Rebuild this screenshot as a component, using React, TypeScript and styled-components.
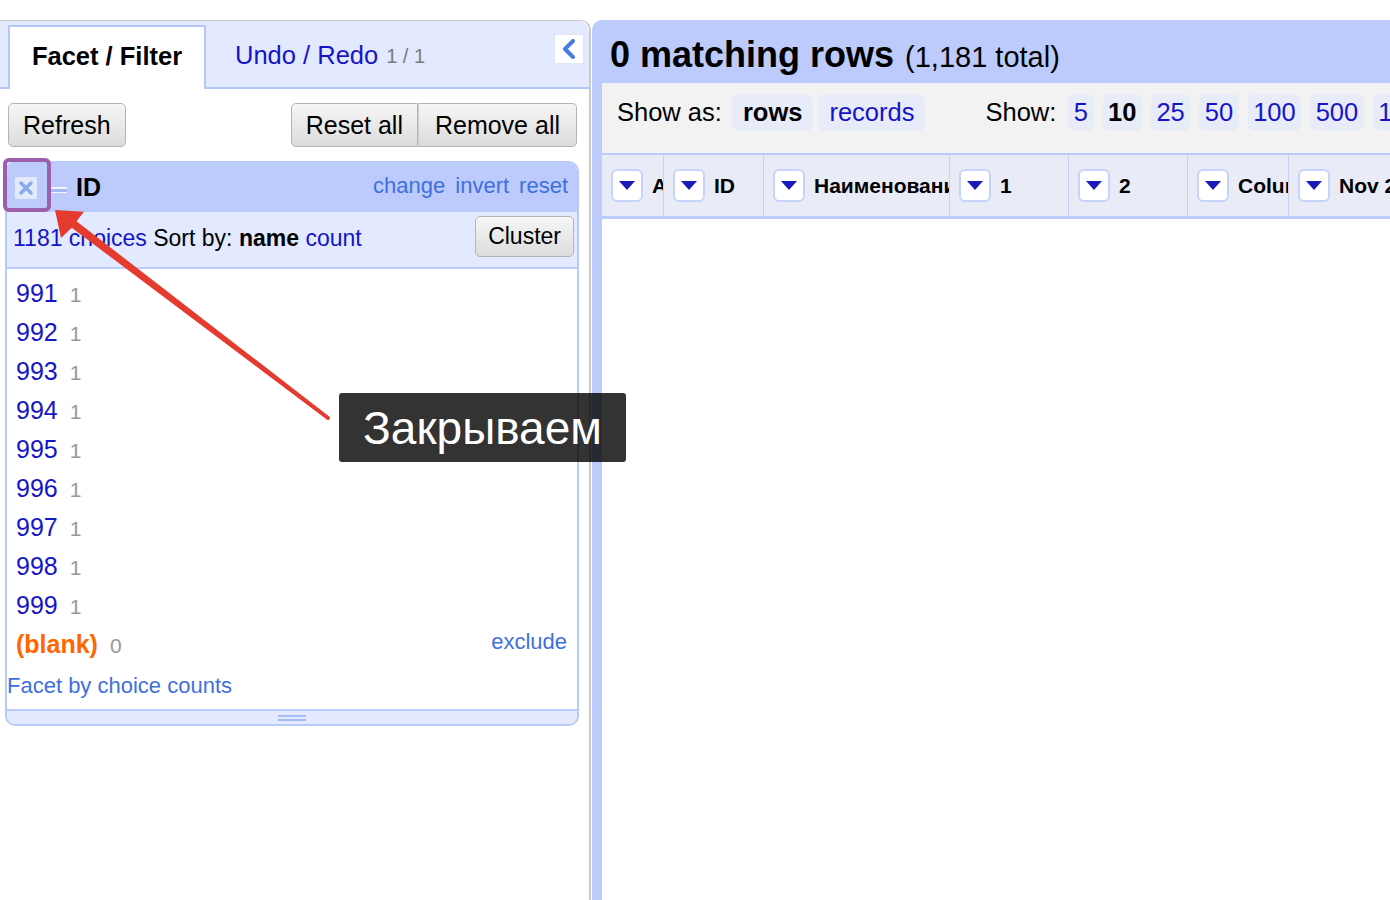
import styled, { createGlobalStyle } from "styled-components";

const GlobalStyle = createGlobalStyle`
  html, body {
    margin: 0;
    padding: 0;
    background: #fff;
    font-family: "Liberation Sans", Arial, Helvetica, sans-serif;
  }
  * {
    box-sizing: border-box;
  }
`;

const BLUE = "#bccbfb";
const LIGHT = "#e3e9ff";
const LINK = "#1515c8";
const SOFT_LINK = "#3f6fdf";

const Page = styled.div`
  position: relative;
  display: flex;
  height: 900px;
  padding-top: 20px;
  overflow: hidden;
`;

/* ---------- left panel ---------- */

const LeftPanel = styled.div`
  width: 591px;
  flex-shrink: 0;
  border-top: 1px solid #c9c9c9;
  border-right: 2px solid #c9c9c9;
  border-top-right-radius: 10px;
  display: flex;
  flex-direction: column;
`;

const TabBar = styled.div`
  display: flex;
  align-items: flex-end;
  height: 68px;
  padding-left: 8px;
  background: ${LIGHT};
  border-bottom: 2px solid #b4c7f6;
  border-top-right-radius: 10px;
`;

const Tab = styled.div<{ $active?: boolean }>`
  height: 64px;
  display: flex;
  align-items: center;
  justify-content: center;
  padding-bottom: 4px;
  font-size: 25.5px;
  white-space: nowrap;
  margin-bottom: -2px;
  ${(p) =>
    p.$active
      ? `
    width: 198px;
    background: #fff;
    border: 2px solid #b4c7f6;
    border-bottom: none;
    font-weight: bold;
    color: #000;
  `
      : `
    padding-left: 29px;
    color: ${LINK};
  `}
`;

const TabCount = styled.span`
  color: #7c7c7c;
  font-size: 20px;
  margin-left: 8px;
  margin-top: 3px;
`;

const CollapseButton = styled.div`
  margin-left: auto;
  margin-right: 5px;
  align-self: flex-start;
  margin-top: 13px;
  width: 30px;
  height: 30px;
  background: #fff;
  border: 1px solid #dfe5f2;
  display: flex;
  align-items: center;
  justify-content: center;
`;

const ButtonRow = styled.div`
  display: flex;
  justify-content: space-between;
  padding: 14px 12px 0 8px;
`;

const ButtonGroup = styled.div`
  display: flex;
`;

const Button = styled.button<{ $pos?: "left" | "right" }>`
  font-family: inherit;
  font-size: 25px;
  color: #000;
  height: 44px;
  padding: 0 ${(p) => (p.$pos === "right" ? "16px" : "14px")};
  background: linear-gradient(#f6f6f6, #dcdcdc);
  border: 1px solid #b4b4b4;
  border-radius: ${(p) =>
    p.$pos === "left" ? "5px 0 0 5px" : p.$pos === "right" ? "0 5px 5px 0" : "5px"};
  ${(p) => (p.$pos === "right" ? "border-left: 1px solid #cfcfcf;" : "")}
`;

const FacetCard = styled.div`
  margin: 14px 10px 0 5px;
  border: 2px solid #b8cbf8;
  border-radius: 10px;
  overflow: hidden;
  background: #fff;
`;

const FacetHeader = styled.div`
  height: 49px;
  display: flex;
  align-items: center;
  padding: 0 9px 0 8px;
  background: ${BLUE};
`;

const FacetTitle = styled.span`
  font-size: 25px;
  font-weight: bold;
  color: #000;
  margin-left: 9px;
`;

const HeaderLinks = styled.div`
  margin-left: auto;
  display: flex;
  gap: 10px;
  font-size: 22px;
  color: ${SOFT_LINK};
  margin-bottom: 4px;
`;

const FacetSubheader = styled.div`
  height: 57px;
  display: flex;
  align-items: flex-start;
  padding: 4px 3px 0 6px;
  background: ${LIGHT};
  border-bottom: 2px solid ${BLUE};
`;

const SubText = styled.div`
  font-size: 23px;
  color: #000;
  margin-top: 9px;
  white-space: nowrap;
`;

const Link = styled.span`
  color: ${LINK};
`;

const Strong = styled.span`
  font-weight: bold;
`;

const ClusterButton = styled(Button)`
  margin-left: auto;
  height: 41px;
  font-size: 23px;
  padding: 0 12px;
`;

const ChoiceList = styled.div`
  padding: 5px 10px 0 9px;
`;

const ChoiceRow = styled.div`
  height: 39px;
  display: flex;
  align-items: center;
`;

const ChoiceLabel = styled.span<{ $blank?: boolean }>`
  font-size: 25px;
  color: ${(p) => (p.$blank ? "#ff6600" : LINK)};
  font-weight: ${(p) => (p.$blank ? "bold" : "normal")};
`;

const ChoiceCount = styled.span`
  font-size: 21px;
  color: #999;
  margin-left: 12px;
  margin-top: 3px;
`;

const ExcludeLink = styled.span`
  margin-left: auto;
  font-size: 22px;
  color: ${SOFT_LINK};
  margin-bottom: 6px;
`;

const ChoiceCountsLink = styled.div`
  font-size: 22px;
  color: ${SOFT_LINK};
  line-height: 24px;
  padding: 10px 0 11px 0;
`;

const FacetFooter = styled.div`
  height: 15px;
  background: ${LIGHT};
  border-top: 2px solid ${BLUE};
  display: flex;
  align-items: center;
  justify-content: center;
`;

const Grip = styled.div`
  width: 28px;
  height: 6px;
  border-top: 2px solid #a4bcf4;
  border-bottom: 2px solid #a4bcf4;
`;

/* ---------- right panel ---------- */

const RightPanel = styled.div`
  flex: 1;
  margin-left: 1px;
  background: ${BLUE};
  border-top-left-radius: 10px;
  display: flex;
  flex-direction: column;
  overflow: hidden;
`;

const Summary = styled.div`
  height: 63px;
  display: flex;
  align-items: center;
  padding: 6px 0 0 18px;
  white-space: nowrap;
`;

const SummaryCount = styled.span`
  font-size: 36px;
  font-weight: bold;
  color: #000;
`;

const SummaryTotal = styled.span`
  font-size: 29px;
  color: #000;
  margin-left: 11px;
  margin-top: 5px;
`;

const ViewArea = styled.div`
  flex: 1;
  margin-left: 10px;
  background: #fff;
  display: flex;
  flex-direction: column;
`;

const OptionsBar = styled.div`
  height: 72px;
  background: #f2f2f2;
  display: flex;
  align-items: flex-start;
  padding: 11px 0 0 15px;
  white-space: nowrap;
  border-bottom: 2px solid ${BLUE};
`;

const OptionLabel = styled.span<{ $spaced?: boolean }>`
  font-size: 25.5px;
  color: #000;
  line-height: 37px;
  margin-left: ${(p) => (p.$spaced ? "60px" : "0")};
  margin-right: ${(p) => (p.$spaced ? "3px" : "5px")};
`;

const Pill = styled.span<{ $current?: boolean; $wide?: boolean }>`
  flex-shrink: 0;
  height: 37px;
  line-height: 37px;
  font-size: 25.5px;
  padding: 0 ${(p) => (p.$wide ? "11px" : "5.5px")};
  margin-left: ${(p) => (p.$wide ? "5px" : "9px")};
  border-radius: 7px;
  background: #e8ebf8;
  color: ${(p) => (p.$current ? "#000" : LINK)};
  font-weight: ${(p) => (p.$current ? "bold" : "normal")};
`;

const ColumnHeaderRow = styled.div`
  height: 64px;
  background: #e9ecf7;
  border-bottom: 3px solid ${BLUE};
  display: flex;
  white-space: nowrap;
`;

const ColumnCell = styled.div<{ $width: number }>`
  width: ${(p) => p.$width}px;
  flex-shrink: 0;
  display: flex;
  align-items: center;
  padding-left: 9px;
  gap: 9px;
  border-right: 1px solid #c5d3f7;
  overflow: hidden;
  font-size: 21px;
  font-weight: bold;
  color: #000;
`;

const DropButton = styled.div`
  width: 32px;
  height: 33px;
  flex-shrink: 0;
  background: #fff;
  border: 2px solid #c6d4fb;
  border-radius: 6px;
  display: flex;
  align-items: center;
  justify-content: center;
`;

/* ---------- annotations ---------- */

const Highlight = styled.div`
  position: absolute;
  left: 3px;
  top: 158px;
  width: 48px;
  height: 54px;
  border: 4px solid #9b5fae;
  border-radius: 6px;
`;

const ArrowLayer = styled.svg`
  position: absolute;
  left: 0;
  top: 0;
  pointer-events: none;
`;

const Callout = styled.div`
  position: absolute;
  left: 339px;
  top: 393px;
  width: 287px;
  height: 69px;
  background: rgba(0, 0, 0, 0.8);
  border-radius: 3px;
  color: #fff;
  font-size: 46px;
  display: flex;
  align-items: center;
  justify-content: center;
`;

const choices = ["991", "992", "993", "994", "995", "996", "997", "998", "999"];

const pageSizes = ["5", "10", "25", "50", "100", "500", "1000"];

const columns = [
  { name: "All", width: 62 },
  { name: "ID", width: 100 },
  { name: "Наименование", width: 186 },
  { name: "1", width: 119 },
  { name: "2", width: 119 },
  { name: "Column", width: 101 },
  { name: "Nov 2021", width: 200 },
];

const DropIcon = () => (
  <svg width="16" height="10" viewBox="0 0 16 10">
    <path d="M0 0 L16 0 L8 9 Z" fill="#1a1ab8" />
  </svg>
);

const App = () => {
  return (
    <>
      <GlobalStyle />
      <Page>
        <LeftPanel>
          <TabBar>
            <Tab $active>Facet / Filter</Tab>
            <Tab>
              Undo / Redo<TabCount>1 / 1</TabCount>
            </Tab>
            <CollapseButton>
              <svg width="14" height="20" viewBox="0 0 14 20">
                <path
                  d="M11 2 L3 10 L11 18"
                  fill="none"
                  stroke="#4a7be0"
                  strokeWidth="4"
                  strokeLinecap="round"
                  strokeLinejoin="round"
                />
              </svg>
            </CollapseButton>
          </TabBar>

          <ButtonRow>
            <Button>Refresh</Button>
            <ButtonGroup>
              <Button $pos="left">Reset all</Button>
              <Button $pos="right">Remove all</Button>
            </ButtonGroup>
          </ButtonRow>

          <FacetCard>
            <FacetHeader>
              <svg width="22" height="22" viewBox="0 0 22 22">
                <rect width="22" height="22" rx="2" fill="#e3eafd" />
                <path
                  d="M6 6 L16 16 M16 6 L6 16"
                  stroke="#89a8ef"
                  strokeWidth="3.5"
                  strokeLinecap="round"
                />
              </svg>
              <svg width="18" height="10" viewBox="0 0 18 10" style={{ marginLeft: 12, marginTop: 4 }}>
                <rect x="0" y="2" width="18" height="6" fill="#f2f5fe" />
                <rect x="0" y="4" width="18" height="3" fill="#9fb8f3" />
              </svg>
              <FacetTitle>ID</FacetTitle>
              <HeaderLinks>
                <span>change</span>
                <span>invert</span>
                <span>reset</span>
              </HeaderLinks>
            </FacetHeader>

            <FacetSubheader>
              <SubText>
                <Link>1181 choices</Link> Sort by: <Strong>name</Strong> <Link>count</Link>
              </SubText>
              <ClusterButton>Cluster</ClusterButton>
            </FacetSubheader>

            <ChoiceList>
              {choices.map((c) => (
                <ChoiceRow key={c}>
                  <ChoiceLabel>{c}</ChoiceLabel>
                  <ChoiceCount>1</ChoiceCount>
                </ChoiceRow>
              ))}
              <ChoiceRow>
                <ChoiceLabel $blank>(blank)</ChoiceLabel>
                <ChoiceCount>0</ChoiceCount>
                <ExcludeLink>exclude</ExcludeLink>
              </ChoiceRow>
            </ChoiceList>
            <ChoiceCountsLink>Facet by choice counts</ChoiceCountsLink>

            <FacetFooter>
              <Grip />
            </FacetFooter>
          </FacetCard>
        </LeftPanel>

        <RightPanel>
          <Summary>
            <SummaryCount>0 matching rows</SummaryCount>
            <SummaryTotal>(1,181 total)</SummaryTotal>
          </Summary>
          <ViewArea>
            <OptionsBar>
              <OptionLabel>Show as:</OptionLabel>
              <Pill $wide $current>rows</Pill>
              <Pill $wide>records</Pill>
              <OptionLabel $spaced>Show:</OptionLabel>
              {pageSizes.map((s) => (
                <Pill key={s} $current={s === "10"}>
                  {s}
                </Pill>
              ))}
            </OptionsBar>
            <ColumnHeaderRow>
              {columns.map((col) => (
                <ColumnCell key={col.name} $width={col.width}>
                  <DropButton>
                    <DropIcon />
                  </DropButton>
                  {col.name}
                </ColumnCell>
              ))}
            </ColumnHeaderRow>
          </ViewArea>
        </RightPanel>

        <Highlight />
        <ArrowLayer width="1390" height="900" viewBox="0 0 1390 900">
          <polygon
            points="55,210 84,211.8 76.5,221.3 329.2,416.4 326.8,419.6 71.7,227.7 61,238"
            fill="#e53b2e"
          />
          <circle cx="328" cy="418" r="2" fill="#e53b2e" />
        </ArrowLayer>
        <Callout>Закрываем</Callout>
      </Page>
    </>
  );
};

export default App;
